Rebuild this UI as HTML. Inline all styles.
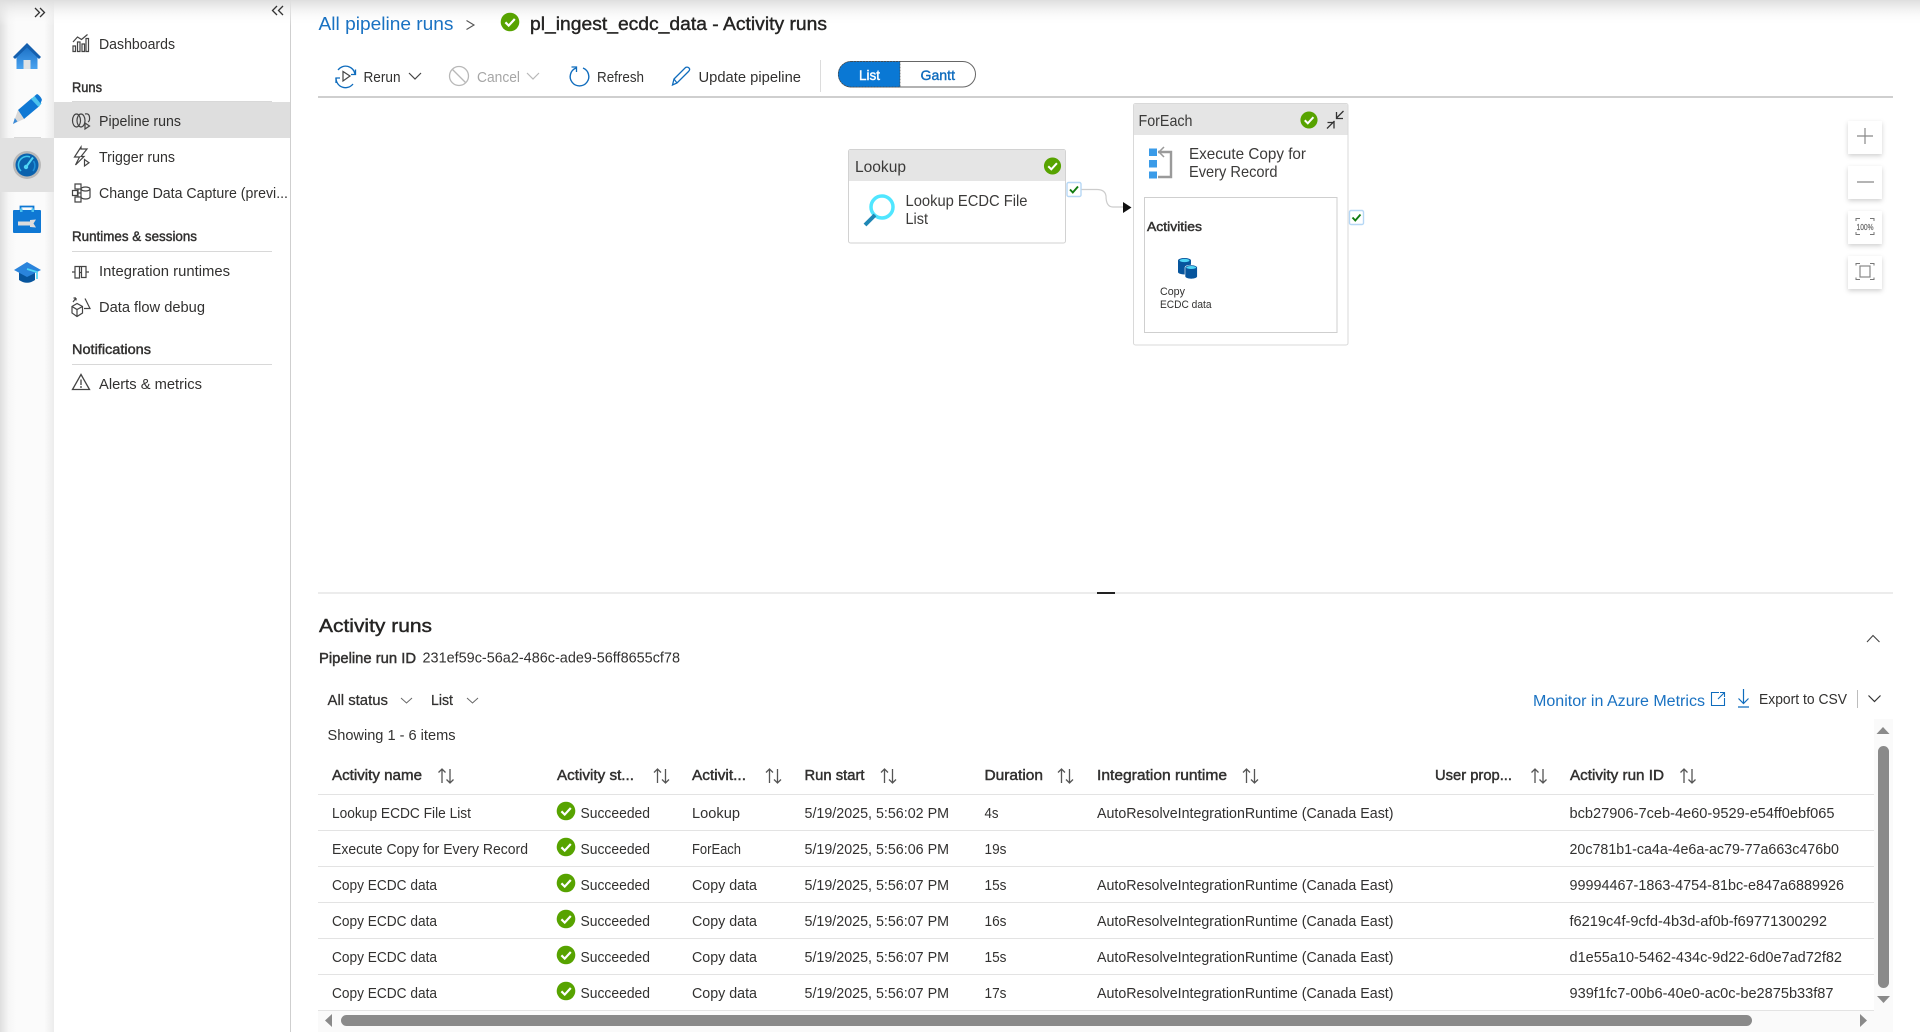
<!DOCTYPE html>
<html lang="en"><head><meta charset="utf-8"><title>pl_ingest_ecdc_data - Activity runs</title>
<style>
html,body{margin:0;padding:0;background:#fff;width:1920px;height:1032px;overflow:hidden}
svg{display:block}
text{font-family:"Liberation Sans",sans-serif;font-size:14.5px;fill:#323130}
.s{stroke:#323130;stroke-width:.45px}
.h{font-size:18px;fill:#252423;stroke:#252423;stroke-width:.4px}
.l{font-size:16px;fill:#3b3a39}
.ic{fill:none;stroke:#444;stroke-width:1.2}
.sort{fill:none;stroke:#555;stroke-width:1.3}
</style></head><body>
<svg xmlns="http://www.w3.org/2000/svg" width="1920" height="1032" viewBox="0 0 1920 1032">
<defs>
<linearGradient id="top" x1="0" y1="0" x2="0" y2="1"><stop offset="0" stop-color="#dedede"/><stop offset="1" stop-color="#fff" stop-opacity="0"/></linearGradient>
<linearGradient id="left" x1="0" y1="0" x2="1" y2="0"><stop offset="0" stop-color="#dfdfdf"/><stop offset=".16" stop-color="#f6f6f6"/><stop offset=".3" stop-color="#fbfbfb"/><stop offset=".82" stop-color="#fbfbfb"/><stop offset="1" stop-color="#ececec"/></linearGradient>
<linearGradient id="homeb" x1="0" y1="0" x2="0" y2="1"><stop offset="0" stop-color="#1a6fc4"/><stop offset="1" stop-color="#4aa3f0"/></linearGradient>
<filter id="sh" x="-30%" y="-30%" width="160%" height="170%"><feDropShadow dx="0" dy="2" stdDeviation="2.5" flood-color="#000" flood-opacity=".18"/></filter>
<g id="ok"><circle r="9.3" fill="#57a300"/><path d="M-4.600 .3L-1.300 3.600L4.800 -3" fill="none" stroke="#fff" stroke-width="2.200"/></g>
<g id="sort"><path class="sort" d="M-4 15V1M-7.500 4.500L-4 1L-.5 4.500"/><path class="sort" d="M4 1V15M.5 11.500L4 15L7.500 11.500"/></g>
<g id="box"><rect x=".5" y=".5" width="14" height="14" rx="1.500" fill="#fff" stroke="#b6d7f5" stroke-width="1.400"/><path d="M3.500 7.500L6.300 10.500L11.500 4.500" fill="none" stroke="#107c10" stroke-width="1.900"/></g>
</defs>

<!-- rail -->
<rect x="0" y="0" width="54" height="1032" fill="url(#left)"/>
<rect x="14" y="137" width="27" height="1" fill="#d8d8d8"/>
<rect x="0" y="138" width="54" height="54" fill="#e1e1e1"/>
<rect x="54" y="102" width="236" height="36" fill="#dedede"/>
<rect x="290" y="0" width="1" height="1032" fill="#cfcfcf"/>
<rect x="0" y="0" width="1920" height="26" fill="url(#top)"/>

<path d="M35 8L39.500 12.500L35 17M40 8L44.500 12.500L40 17" fill="none" stroke="#333" stroke-width="1.300"/>
<path d="M277 6L272.500 10.500L277 15M283 6L278.500 10.500L283 15" fill="none" stroke="#333" stroke-width="1.300"/>

<!-- home -->
<path d="M16.500 56L27 46L37.500 56V69H16.500Z" fill="url(#homeb)"/><rect x="23.500" y="60" width="7" height="9" fill="#e0e2e4"/>
<path d="M27 43L41 57L39 59L27 47.500L15 59L13 57Z" fill="#145fae"/>
<!-- pencil -->
<path d="M18 110L32 98L39.500 106L24 119Z" fill="#0f78d4"/><path d="M31 99L34.500 96L41.500 103.500L38.500 107Z" fill="#4cc3ee"/><path d="M34.500 96L37 94Q38.500 94.500 40.500 97T41.500 101L40.500 103.500Z" fill="#0f78d4"/>
<path d="M18 110L24 119L13 124Z" fill="#d8d8d8"/><path d="M14.800 118L17.500 121.500L13 124Z" fill="#3a8ad8"/>
<!-- monitor -->
<circle cx="27" cy="165" r="14" fill="#b8b8b8"/><circle cx="27" cy="165" r="11.500" fill="#0b62ad"/>
<path d="M21 171A8.500 8.500 0 0 1 30 157" fill="none" stroke="#3ec5ee" stroke-width="1.500"/><path d="M33.500 161A8.500 8.500 0 0 1 33 171" fill="none" stroke="#1e90d8" stroke-width="1.500"/><path d="M26 167L33 157.500" stroke="#50d6f5" stroke-width="2"/><circle cx="26" cy="167" r="2.200" fill="#50d6f5"/>
<!-- toolbox -->
<path d="M20.500 210V206.500H33.500V210" fill="none" stroke="#0f78d4" stroke-width="1.800"/>
<rect x="13" y="210" width="28" height="23" rx="1" fill="#0f78d4"/><rect x="20" y="208.500" width="2.500" height="3.500" fill="#4cc3ee"/><rect x="31.500" y="208.500" width="2.500" height="3.500" fill="#4cc3ee"/><rect x="18" y="221.500" width="14" height="4" fill="#dcdcdc"/><path d="M30 220L36 219.500L33.500 223.500L36 227.500L30 227Z" fill="#dcdcdc"/>
<!-- hat -->
<path d="M19 272V280Q27 285.500 35 280V272Z" fill="#07559d"/><path d="M27 262L41 270L27 277L14 270Z" fill="#2a84dc"/><path d="M27 269L37 272V279" fill="none" stroke="#50d6f5" stroke-width="1.700"/>

<!-- nav icons -->
<g class="ic">
<path d="M73 51.500V46H75.500V51.500ZM77.500 51.500V42H80V51.500ZM82 51.500V44H84.500V51.500ZM86 51.500V38.500H88.500V51.500Z"/><path d="M73 42L77.500 37L81.500 39.500L87.500 34.500"/>
<ellipse cx="76.500" cy="120.500" rx="4" ry="6.500"/><ellipse cx="81" cy="120.500" rx="4" ry="6.500"/><path d="M85 114q4-1 4.500 3t-1.500 5"/><path d="M85 123v6l4.500-3z"/>
<path d="M81 147L74.500 157H79.500L75.500 165L84 156.500H81L87 149H81Z"/><path d="M84.500 159.500v6.500l4.500-3.300z"/>
<path d="M75 184h6v5h-6zM75 197h6v5h-6zM72.500 190.500h5v5h-5zM78 189v8M77.500 193h3"/><ellipse cx="85.500" cy="189" rx="4.500" ry="2"/><path d="M81 189v8a4.500 2 0 0 0 9 0v-8"/>
<path d="M72 272h3M86 272h3M75 266.500h6.500v6h-2v5.500h-4.500zM79.500 272.500v-6h6.500v11h-4.500v-5"/>
<path d="M77 303.500l-5 3v6.500l5 3.500l5.500-3.500v-6.500zM72 306.500l5 3l5.500-3M77 309.500v7"/><path d="M85 298.500l5 10h-6M73 302l3-4M76 298h-2.500M76 298v2.500" />
</g>
<path d="M81 374.500L72.500 389.500H89.500Z" fill="none" stroke="#444" stroke-width="1.300"/><path d="M81 379.500V385M81 386V388" stroke="#444" stroke-width="1.300"/>

<text x="99" y="49" textLength="76" lengthAdjust="spacingAndGlyphs">Dashboards</text>
<text x="72" y="92" textLength="30" lengthAdjust="spacingAndGlyphs" class="s" style="font-size:14px">Runs</text>
<rect x="72" y="101" width="200" height="1" fill="#d8d8d8"/>
<text x="99" y="126" textLength="82" lengthAdjust="spacingAndGlyphs">Pipeline runs</text>
<text x="99" y="162" textLength="76" lengthAdjust="spacingAndGlyphs">Trigger runs</text>
<text x="99" y="198" textLength="189" lengthAdjust="spacingAndGlyphs">Change Data Capture (previ...</text>
<text x="72" y="241" textLength="125" lengthAdjust="spacingAndGlyphs" class="s" style="font-size:14px">Runtimes &amp; sessions</text>
<rect x="72" y="251" width="200" height="1" fill="#d8d8d8"/>
<text x="99" y="276" textLength="131" lengthAdjust="spacingAndGlyphs">Integration runtimes</text>
<text x="99" y="312" textLength="106" lengthAdjust="spacingAndGlyphs">Data flow debug</text>
<text x="72" y="354" textLength="79" lengthAdjust="spacingAndGlyphs" class="s" style="font-size:14px">Notifications</text>
<rect x="72" y="364" width="200" height="1" fill="#d8d8d8"/>
<text x="99" y="389" textLength="103" lengthAdjust="spacingAndGlyphs">Alerts &amp; metrics</text>

<!-- header -->
<text x="318.500" y="30" textLength="135" lengthAdjust="spacingAndGlyphs" style="font-size:18.500px;fill:#1a72c2">All pipeline runs</text>
<path d="M466.500 20.500L474 25L466.500 29.500" fill="none" stroke="#555" stroke-width="1.100"/>
<use href="#ok" x="510" y="22"/>
<text x="530" y="30" textLength="297" lengthAdjust="spacingAndGlyphs" class="h" style="font-size:18.500px">pl_ingest_ecdc_data - Activity runs</text>

<!-- toolbar -->
<path d="M338 70A9.500 9.500 0 0 1 355 74M353 84A9.500 9.500 0 0 1 336 78" fill="none" stroke="#0f6cbd" stroke-width="1.300"/><path d="M355.500 69.500V74.500H351M336 83V78H340" fill="none" stroke="#0f6cbd" stroke-width="1.300"/><path d="M343 71.500V81L350 76Z" fill="none" stroke="#444" stroke-width="1.200"/>
<text x="363.500" y="82" textLength="37" lengthAdjust="spacingAndGlyphs">Rerun</text>
<path d="M409 73L415 79L421 73" fill="none" stroke="#444" stroke-width="1.200"/>
<circle cx="459" cy="76" r="9.500" fill="none" stroke="#b8b8b8" stroke-width="1.300"/><path d="M452.500 69.500L465.500 82.500" stroke="#b8b8b8" stroke-width="1.300"/>
<text x="477" y="82" textLength="43" lengthAdjust="spacingAndGlyphs" style="fill:#a6a6a6">Cancel</text>
<path d="M527 73L533 79L539 73" fill="none" stroke="#b8b8b8" stroke-width="1.200"/>
<path d="M576 68A9.300 9.300 0 1 0 583 68" fill="none" stroke="#0f6cbd" stroke-width="1.400"/><path d="M571.500 67H576.500V72" fill="none" stroke="#0f6cbd" stroke-width="1.300"/>
<text x="597" y="82" textLength="47" lengthAdjust="spacingAndGlyphs">Refresh</text>
<path d="M672.500 85L674 79L685.500 67.500Q687.500 66.500 689 68T688.500 71.500L677 83Z" fill="none" stroke="#0f6cbd" stroke-width="1.300"/><path d="M674 79L677 83" stroke="#0f6cbd" stroke-width="1.200"/>
<text x="698.500" y="82" textLength="102.500" lengthAdjust="spacingAndGlyphs">Update pipeline</text>
<rect x="820" y="60" width="1" height="32" fill="#dcdcdc"/>
<rect x="838.500" y="61.500" width="137" height="25.500" rx="12.700" fill="#fff" stroke="#666" stroke-width="1"/>
<path d="M851 61.500H900V87H851A12.700 12.700 0 0 1 851 61.500Z" fill="#0a78d4" stroke="#444" stroke-width=".7" stroke-dasharray="2 1"/>
<text x="859" y="80" textLength="21" lengthAdjust="spacingAndGlyphs" style="font-size:14px;fill:#fff;stroke:#fff;stroke-width:.4px">List</text>
<text x="920.500" y="80" textLength="34.500" lengthAdjust="spacingAndGlyphs" style="font-size:14px;fill:#0f6cbd;stroke:#0f6cbd;stroke-width:.4px">Gantt</text>
<rect x="318" y="96" width="1575" height="2" fill="#cfcfcf"/>

<!-- canvas -->
<rect x="848.500" y="149.500" width="217" height="93.500" rx="2" fill="#fff" stroke="#d2d2d2"/>
<path d="M849 181V152a2 2 0 0 1 2-2H1063a2 2 0 0 1 2 2V181Z" fill="#e5e5e5"/>
<text x="855" y="172" textLength="51" lengthAdjust="spacingAndGlyphs" class="l">Lookup</text>
<use href="#ok" transform="translate(1052.500 166) scale(.92)"/>
<circle cx="882" cy="207" r="11" fill="none" stroke="#50e6ff" stroke-width="3.500"/><path d="M865 225L875 215" stroke="#1f87b5" stroke-width="4"/>
<text x="905.500" y="206" textLength="122" lengthAdjust="spacingAndGlyphs" class="l">Lookup ECDC File</text>
<text x="905.500" y="224" textLength="22.500" lengthAdjust="spacingAndGlyphs" class="l">List</text>
<use href="#box" x="1066.500" y="182"/>
<path d="M1082 196.500" fill="none"/>
<path d="M1082 196H1082M1081.500 189.500H1097Q1105 189.500 1106 196Q1106 207 1113 207H1124" fill="none" stroke="#ccc" stroke-width="1.200"/>
<path d="M1123 202L1131.500 207.500L1123 213Z" fill="#111"/>

<rect x="1133.500" y="103.500" width="214.500" height="241.500" rx="2" fill="#fff" stroke="#d9d9d9"/>
<path d="M1134 135V106a2 2 0 0 1 2-2H1345.500a2 2 0 0 1 2 2V135Z" fill="#e5e5e5"/>
<text x="1138.500" y="126" textLength="54" lengthAdjust="spacingAndGlyphs" class="l">ForEach</text>
<use href="#ok" transform="translate(1309 120) scale(.92)"/>
<path d="M1327 128.500L1334.500 121M1327.500 122.500H1334V128.500M1343.500 111L1336.500 118M1336.500 112V118.500H1343" fill="none" stroke="#333" stroke-width="1.300"/>
<rect x="1149" y="148.500" width="8" height="7.500" fill="#3a9be8"/><rect x="1149" y="160" width="8" height="7.500" fill="#3a9be8"/><rect x="1149" y="171.500" width="8" height="7" fill="#3a9be8"/>
<path d="M1158 152H1171V177H1158" fill="none" stroke="#9a9a9a" stroke-width="2.400"/><path d="M1164 147L1159 152L1164 157" fill="none" stroke="#9a9a9a" stroke-width="1.500"/>
<text x="1189" y="159" textLength="117" lengthAdjust="spacingAndGlyphs" class="l">Execute Copy for</text>
<text x="1189" y="177" textLength="88.500" lengthAdjust="spacingAndGlyphs" class="l">Every Record</text>
<rect x="1144.500" y="197.500" width="192.500" height="135" fill="#fff" stroke="#cfcfcf"/>
<text x="1147" y="231" textLength="55" lengthAdjust="spacingAndGlyphs" class="s" style="font-size:13px">Activities</text>
<path d="M1178 260.500a6.500 2.500 0 0 1 13 0V272a6.500 2.500 0 0 1-13 0Z" fill="#07559d"/><ellipse cx="1184.500" cy="260.500" rx="5" ry="1.600" fill="#50d6f5"/>
<path d="M1185 267.500a6.200 2.500 0 0 1 12.400 0V276.500a6.200 2.500 0 0 1-12.400 0Z" fill="#07559d" stroke="#fff" stroke-width=".6"/><ellipse cx="1191.200" cy="267.500" rx="5" ry="1.500" fill="#50d6f5"/>
<text x="1160" y="295" textLength="25" lengthAdjust="spacingAndGlyphs" style="font-size:11px">Copy</text>
<text x="1160" y="308" textLength="51.500" lengthAdjust="spacingAndGlyphs" style="font-size:11px">ECDC data</text>
<use href="#box" x="1349" y="210"/>

<!-- zoom buttons -->
<g filter="url(#sh)" fill="#fff"><rect x="1848" y="121" width="34" height="33"/><rect x="1848" y="166" width="34" height="33"/><rect x="1848" y="211" width="34" height="33"/><rect x="1848" y="256" width="34" height="33"/></g>
<path d="M1857 136H1873M1865 128V144M1857 182H1874" stroke="#888" stroke-width="1.200" fill="none"/>
<path d="M1856 221V218.500H1860M1870 218.500H1874V221M1856 232V234.500H1860M1870 234.500H1874V232" fill="none" stroke="#777" stroke-width="1"/>
<text x="1856.500" y="230" textLength="17" lengthAdjust="spacingAndGlyphs" style="font-size:8.500px;fill:#666;stroke:#666;stroke-width:.2px">100%</text>
<path d="M1856 265.500V263.500H1860M1870 263.500H1874V265.500M1856 277.500V279.500H1860M1870 279.500H1874V277.500" fill="none" stroke="#777" stroke-width="1"/><rect x="1860" y="266" width="10" height="11" fill="none" stroke="#888" stroke-width="1.200"/>

<!-- splitter -->
<rect x="318" y="592" width="1575" height="2" fill="#ececec"/><rect x="1097" y="592" width="18" height="2" fill="#222"/>

<!-- activity section -->
<text x="319" y="632" textLength="113" lengthAdjust="spacingAndGlyphs" class="h">Activity runs</text>
<path d="M1867 642L1873 635.500L1879.500 642" fill="none" stroke="#444" stroke-width="1.100"/>
<text x="319" y="663" textLength="97" lengthAdjust="spacingAndGlyphs" class="s">Pipeline run ID</text>
<text x="422.500" y="662.500" textLength="257.500" lengthAdjust="spacingAndGlyphs">231ef59c-56a2-486c-ade9-56ff8655cf78</text>
<text x="327.500" y="705" textLength="60.500" lengthAdjust="spacingAndGlyphs" style="stroke:#323130;stroke-width:.25px">All status</text>
<path d="M401 698L406.500 703L412 698" fill="none" stroke="#666" stroke-width="1"/>
<text x="431" y="705" textLength="22" lengthAdjust="spacingAndGlyphs" style="stroke:#323130;stroke-width:.25px">List</text>
<path d="M467 698L472.500 703L478 698" fill="none" stroke="#666" stroke-width="1"/>
<text x="327.500" y="740" textLength="128" lengthAdjust="spacingAndGlyphs">Showing 1 - 6 items</text>
<text x="1533" y="706" textLength="172" lengthAdjust="spacingAndGlyphs" style="font-size:15.500px;fill:#1a72c2">Monitor in Azure Metrics</text>
<path d="M1719 692.500H1711.500V705.500H1724.500V698M1718 699L1724.500 692.500M1720 692.500H1724.500V697" fill="none" stroke="#0f6cbd" stroke-width="1.100"/>
<path d="M1743.500 689V703.500M1738.500 698.500L1743.500 703.500L1748.500 698.500M1738 707H1749" fill="none" stroke="#0f6cbd" stroke-width="1.200"/>
<text x="1759" y="704" textLength="88" lengthAdjust="spacingAndGlyphs">Export to CSV</text>
<rect x="1857" y="690" width="1" height="18" fill="#bdbdbd"/>
<path d="M1868.500 695.500L1874.500 701.500L1880.500 695.500" fill="none" stroke="#333" stroke-width="1.200"/>

<!-- table head -->
<text x="332" y="780" textLength="90" lengthAdjust="spacingAndGlyphs" class="s">Activity name</text>
<text x="557" y="780" textLength="77" lengthAdjust="spacingAndGlyphs" class="s">Activity st...</text>
<text x="692" y="780" textLength="54" lengthAdjust="spacingAndGlyphs" class="s">Activit...</text>
<text x="804.500" y="780" textLength="60" lengthAdjust="spacingAndGlyphs" class="s">Run start</text>
<text x="984.500" y="780" textLength="58.500" lengthAdjust="spacingAndGlyphs" class="s">Duration</text>
<text x="1097" y="780" textLength="130" lengthAdjust="spacingAndGlyphs" class="s">Integration runtime</text>
<text x="1435" y="780" textLength="77" lengthAdjust="spacingAndGlyphs" class="s">User prop...</text>
<text x="1570" y="780" textLength="94" lengthAdjust="spacingAndGlyphs" class="s">Activity run ID</text>
<use href="#sort" x="446" y="768"/><use href="#sort" x="661.500" y="768"/><use href="#sort" x="773.500" y="768"/><use href="#sort" x="888.500" y="768"/><use href="#sort" x="1065.500" y="768"/><use href="#sort" x="1250.500" y="768"/><use href="#sort" x="1539" y="768"/><use href="#sort" x="1688" y="768"/>

<!-- lines -->
<g fill="#e3e3e3"><rect x="318" y="794" width="1556" height="1"/><rect x="318" y="830" width="1556" height="1"/><rect x="318" y="866" width="1556" height="1"/><rect x="318" y="902" width="1556" height="1"/><rect x="318" y="938" width="1556" height="1"/><rect x="318" y="974" width="1556" height="1"/><rect x="318" y="1010" width="1556" height="1"/></g>

<!-- rows -->
<text x="332" y="818" textLength="139" lengthAdjust="spacingAndGlyphs">Lookup ECDC File List</text>
<use href="#ok" x="566" y="811"/><text x="580.500" y="818" textLength="69.500" lengthAdjust="spacingAndGlyphs">Succeeded</text>
<text x="692" y="818" textLength="48" lengthAdjust="spacingAndGlyphs">Lookup</text>
<text x="804.500" y="818" textLength="144.500" lengthAdjust="spacingAndGlyphs">5/19/2025, 5:56:02 PM</text>
<text x="984.500" y="818" textLength="14" lengthAdjust="spacingAndGlyphs">4s</text>
<text x="1097" y="818" textLength="296.500" lengthAdjust="spacingAndGlyphs">AutoResolveIntegrationRuntime (Canada East)</text>
<text x="1569.500" y="818" textLength="265" lengthAdjust="spacingAndGlyphs">bcb27906-7ceb-4e60-9529-e54ff0ebf065</text>

<text x="332" y="854" textLength="196" lengthAdjust="spacingAndGlyphs">Execute Copy for Every Record</text>
<use href="#ok" x="566" y="847"/><text x="580.500" y="854" textLength="69.500" lengthAdjust="spacingAndGlyphs">Succeeded</text>
<text x="692" y="854" textLength="49" lengthAdjust="spacingAndGlyphs">ForEach</text>
<text x="804.500" y="854" textLength="144.500" lengthAdjust="spacingAndGlyphs">5/19/2025, 5:56:06 PM</text>
<text x="984.500" y="854" textLength="22" lengthAdjust="spacingAndGlyphs">19s</text>
<text x="1569.500" y="854" textLength="269.500" lengthAdjust="spacingAndGlyphs">20c781b1-ca4a-4e6a-ac79-77a663c476b0</text>

<text x="332" y="890" textLength="105" lengthAdjust="spacingAndGlyphs">Copy ECDC data</text>
<use href="#ok" x="566" y="883"/><text x="580.500" y="890" textLength="69.500" lengthAdjust="spacingAndGlyphs">Succeeded</text>
<text x="692" y="890" textLength="65" lengthAdjust="spacingAndGlyphs">Copy data</text>
<text x="804.500" y="890" textLength="144.500" lengthAdjust="spacingAndGlyphs">5/19/2025, 5:56:07 PM</text>
<text x="984.500" y="890" textLength="22" lengthAdjust="spacingAndGlyphs">15s</text>
<text x="1097" y="890" textLength="296.500" lengthAdjust="spacingAndGlyphs">AutoResolveIntegrationRuntime (Canada East)</text>
<text x="1569.500" y="890" textLength="274.500" lengthAdjust="spacingAndGlyphs">99994467-1863-4754-81bc-e847a6889926</text>

<text x="332" y="926" textLength="105" lengthAdjust="spacingAndGlyphs">Copy ECDC data</text>
<use href="#ok" x="566" y="919"/><text x="580.500" y="926" textLength="69.500" lengthAdjust="spacingAndGlyphs">Succeeded</text>
<text x="692" y="926" textLength="65" lengthAdjust="spacingAndGlyphs">Copy data</text>
<text x="804.500" y="926" textLength="144.500" lengthAdjust="spacingAndGlyphs">5/19/2025, 5:56:07 PM</text>
<text x="984.500" y="926" textLength="22" lengthAdjust="spacingAndGlyphs">16s</text>
<text x="1097" y="926" textLength="296.500" lengthAdjust="spacingAndGlyphs">AutoResolveIntegrationRuntime (Canada East)</text>
<text x="1569.500" y="926" textLength="257.500" lengthAdjust="spacingAndGlyphs">f6219c4f-9cfd-4b3d-af0b-f69771300292</text>

<text x="332" y="962" textLength="105" lengthAdjust="spacingAndGlyphs">Copy ECDC data</text>
<use href="#ok" x="566" y="955"/><text x="580.500" y="962" textLength="69.500" lengthAdjust="spacingAndGlyphs">Succeeded</text>
<text x="692" y="962" textLength="65" lengthAdjust="spacingAndGlyphs">Copy data</text>
<text x="804.500" y="962" textLength="144.500" lengthAdjust="spacingAndGlyphs">5/19/2025, 5:56:07 PM</text>
<text x="984.500" y="962" textLength="22" lengthAdjust="spacingAndGlyphs">15s</text>
<text x="1097" y="962" textLength="296.500" lengthAdjust="spacingAndGlyphs">AutoResolveIntegrationRuntime (Canada East)</text>
<text x="1569.500" y="962" textLength="272.500" lengthAdjust="spacingAndGlyphs">d1e55a10-5462-434c-9d22-6d0e7ad72f82</text>

<text x="332" y="998" textLength="105" lengthAdjust="spacingAndGlyphs">Copy ECDC data</text>
<use href="#ok" x="566" y="991"/><text x="580.500" y="998" textLength="69.500" lengthAdjust="spacingAndGlyphs">Succeeded</text>
<text x="692" y="998" textLength="65" lengthAdjust="spacingAndGlyphs">Copy data</text>
<text x="804.500" y="998" textLength="144.500" lengthAdjust="spacingAndGlyphs">5/19/2025, 5:56:07 PM</text>
<text x="984.500" y="998" textLength="22" lengthAdjust="spacingAndGlyphs">17s</text>
<text x="1097" y="998" textLength="296.500" lengthAdjust="spacingAndGlyphs">AutoResolveIntegrationRuntime (Canada East)</text>
<text x="1569.500" y="998" textLength="264" lengthAdjust="spacingAndGlyphs">939f1fc7-00b6-40e0-ac0c-be2875b33f87</text>

<!-- scrollbars -->
<rect x="1874" y="719" width="19" height="313" fill="#fafafa"/>
<rect x="318" y="1011" width="1575" height="21" fill="#fafafa"/>
<path d="M1876.500 734L1883 727L1889.500 734Z" fill="#8a8a8a"/>
<rect x="1878" y="746" width="11" height="242" rx="5.500" fill="#8a8a8a"/>
<path d="M1877 996H1890L1883.500 1003Z" fill="#8a8a8a"/>
<path d="M332 1014V1027L325 1020.500Z" fill="#8a8a8a"/>
<rect x="341" y="1015" width="1411" height="11" rx="5.500" fill="#8a8a8a"/>
<path d="M1860 1014V1027L1867 1020.500Z" fill="#8a8a8a"/>
</svg>
</body></html>
